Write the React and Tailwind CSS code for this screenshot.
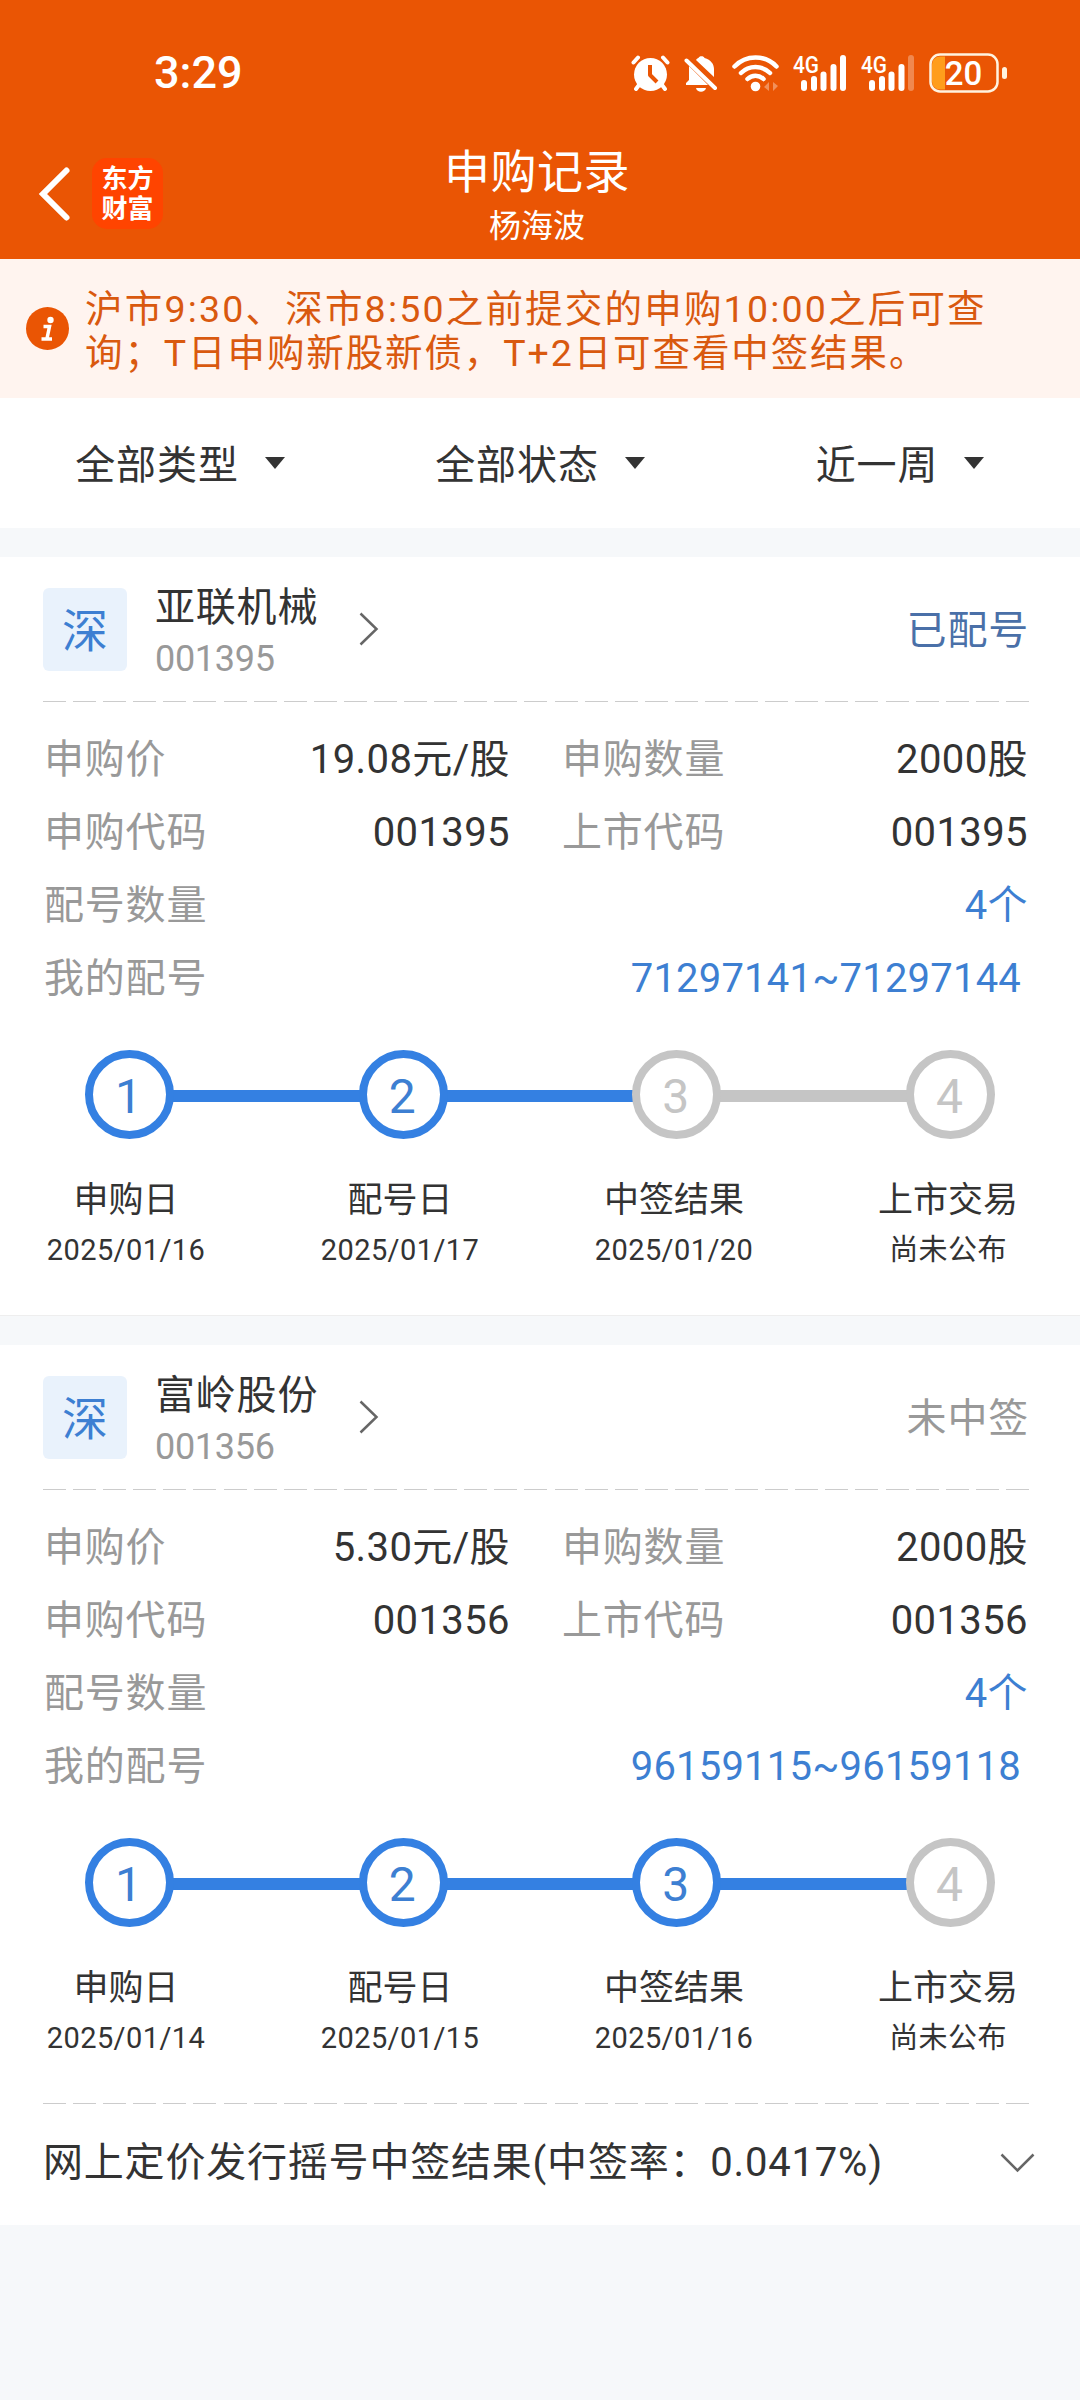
import { useState } from 'react'

const filters = ['全部类型', '全部状态', '近一周']

const records = [
  {
    name: '亚联机械',
    code: '001395',
    status: '已配号',
    statusClass: 'text-[#4a70a8]',
    price: '19.08元/股',
    amount: '2000股',
    count: '4个',
    numbers: '71297141~71297144',
    current: 2,
    steps: [
      { label: '申购日', date: '2025/01/16' },
      { label: '配号日', date: '2025/01/17' },
      { label: '中签结果', date: '2025/01/20' },
      { label: '上市交易', date: '尚未公布' }
    ]
  },
  {
    name: '富岭股份',
    code: '001356',
    status: '未中签',
    statusClass: 'text-[#999999]',
    price: '5.30元/股',
    amount: '2000股',
    count: '4个',
    numbers: '96159115~96159118',
    current: 3,
    steps: [
      { label: '申购日', date: '2025/01/14' },
      { label: '配号日', date: '2025/01/15' },
      { label: '中签结果', date: '2025/01/16' },
      { label: '上市交易', date: '尚未公布' }
    ],
    result: '网上定价发行摇号中签结果(中签率：0.0417%)'
  }
]

function AlarmIcon() {
  return (
    <svg width="39" height="36" viewBox="0 0 39 36" fill="none" stroke="#fff" strokeWidth="4" strokeLinecap="round">
      <path d="M2.5 7.5 7 2.5M36.500 7.500 32 2.500M8 30 5 34M31 30 34 34" />
      <circle cx="19.500" cy="19.500" r="16.500" fill="#fff" stroke="none" />
      <path d="M19 10V20L26 27" stroke="#ea5504" strokeLinecap="butt" strokeLinejoin="round" />
    </svg>
  )
}

function BellOffIcon() {
  return (
    <svg width="34" height="37" viewBox="0 0 34 37" fill="none">
      <path d="M5 11 24 30H2V28L5 25Z" fill="#fff" />
      <path d="M12 5C13 3.500 14 3 14.500 3 15 0.500 20 0.500 20.500 3 27 5 30 9 30 14V22Z" fill="#fff" />
      <path d="M2.500 5.500 31 33" stroke="#fff" strokeWidth="4" strokeLinecap="round" />
      <path d="M12 33H22C21 38 13 38 12 33Z" fill="#fff" />
    </svg>
  )
}

function WifiIcon() {
  return (
    <svg width="47" height="37" viewBox="0 0 47 37" fill="none" stroke="#fff" strokeWidth="4.500" strokeLinecap="round">
      <path d="M2.500 11.500C14 -0.500 33 -0.500 44.500 11.500M9 18C17 10 30 10 38 18M15.500 24C20 19.500 27 19.500 31.500 24" />
      <circle cx="23.500" cy="31.500" r="4.800" fill="#fff" stroke="none" />
      <path d="M32 32 37 27V36M41 27V36L46 31Z" stroke="none" fill="#fff" fillOpacity="0.35" />
    </svg>
  )
}

function SignalIcon({ level }) {
  const bars = [
    { x: 8, y: 25 },
    { x: 18, y: 21 },
    { x: 27.5, y: 16.5 },
    { x: 37.5, y: 9 },
    { x: 47, y: 0 }
  ]
  return (
    <svg className="overflow-visible" width="54" height="36" viewBox="0 0 54 36" fill="#fff">
      <text x="0" y="17.500" fontSize="24" fontWeight="500" textLength="26" lengthAdjust="spacingAndGlyphs">
        4G
      </text>
      {bars.map((bar, index) => (
        <rect key={bar.x} x={bar.x} y={bar.y} width="6" height={36 - bar.y} rx="3" fillOpacity={index < level ? 1 : 0.3} />
      ))}
    </svg>
  )
}

function BatteryIcon() {
  return (
    <svg className="overflow-visible" width="78" height="40" viewBox="0 0 78 40" fill="none">
      <path d="M11 3.500H16V36.500H11A8 8 0 0 1 3 28.500V11.500A8 8 0 0 1 11 3.500Z" fill="#ff9d1c" />
      <rect x="1.500" y="1.500" width="67" height="37" rx="9.500" stroke="#fff3e0" strokeWidth="2.500" />
      <rect x="73" y="14" width="5" height="12" rx="2.500" fill="#fff3e0" />
      <text x="34.500" y="31.500" fontSize="33" fontWeight="500" fill="#fff" textAnchor="middle">
        20
      </text>
    </svg>
  )
}

function StatusBar() {
  return (
    <div className="flex h-[146px] items-center justify-between pl-[154px] pr-[73px]">
      <span className="text-[45px] font-medium leading-[60px] text-white">3:29</span>
      <div className="flex items-center gap-3.5">
        <AlarmIcon />
        <BellOffIcon />
        <WifiIcon />
        <SignalIcon level={5} />
        <SignalIcon level={4} />
        <BatteryIcon />
      </div>
    </div>
  )
}

function TitleBar() {
  return (
    <div className="relative flex h-[113px] items-start">
      <button className="ml-[38px] mt-5">
        <svg width="34" height="56" viewBox="0 0 34 56" fill="none" stroke="#fff" strokeWidth="6" strokeLinecap="round">
          <path d="M28.500 4.500 5 28 28.500 51.500" />
        </svg>
      </button>
      <div className="ml-5 mt-3 flex h-[71px] w-[71px] flex-col items-center justify-center rounded-[15px] bg-[#ff4400] text-[26px] font-bold leading-[30px] text-white">
        <span>东方</span>
        <span>财富</span>
      </div>
      <div className="absolute inset-x-0 top-0.5 flex flex-col items-center pr-1.5 text-white">
        <h1 className="text-[46px] leading-[48px] tracking-[0.5px]">申购记录</h1>
        <span className="mt-1.5 text-[32px] leading-[48px]">杨海波</span>
      </div>
    </div>
  )
}

function Divider() {
  return <div className="mx-[43px] h-px w-[986px] bg-[repeating-linear-gradient(90deg,#cccccc_0px_23px,transparent_23px_30.09px)]" />
}

function Field({ label, value }) {
  return (
    <div className="flex items-center justify-between">
      <span className="text-[#999999]">{label}</span>
      <span className="tracking-[0.4px] text-[#333333]">{value}</span>
    </div>
  )
}

function Steps({ steps, current }) {
  return (
    <div>
      <div className="mx-[85px] mt-[35px] flex items-center">
        {steps.map((step, index) => {
          const done = index < current
          return (
            <div key={step.label} className={index > 0 ? 'flex flex-1 items-center' : 'flex items-center'}>
              {index > 0 && (
                <div className={`-mx-1 mt-[3px] h-3 flex-1 ${index <= current ? 'bg-[#3480e2]' : 'bg-[#c5c5c5]'}`} />
              )}
              <div
                className={`relative flex h-[89px] w-[89px] items-center justify-center rounded-full border-[8.5px] bg-white pr-0.5 pt-1 text-[48px] leading-none ${
                  done ? 'border-[#3480e2] text-[#3d7fd2]' : 'border-[#c5c5c5] text-[#c5c5c5]'
                }`}
              >
                {index + 1}
              </div>
            </div>
          )
        })}
      </div>
      <div className="mt-[37px] flex justify-between pl-[46px] pr-[52px] text-[#333333]">
        {steps.map((step) => (
          <div key={step.label} className="flex w-40 flex-col items-center whitespace-nowrap">
            <span className="text-[35px] leading-[50px]">{step.label}</span>
            <span className="text-[29px] leading-[48px] tracking-[0.4px]">{step.date}</span>
          </div>
        ))}
      </div>
    </div>
  )
}

function RecordCard({ record }) {
  const [open, setOpen] = useState(false)

  return (
    <section className="bg-white">
      {/* Stock */}
      <div className="flex h-36 items-center pl-[43px] pr-[51px]">
        <div className="flex h-[83px] w-[84px] items-center justify-center rounded-md bg-[#e9f2fc] pt-1 text-[46px] leading-none text-[#3d7fd2]">
          深
        </div>
        <div className="ml-7 flex flex-col pt-[7px]">
          <span className="text-[40px] leading-[52px] tracking-[0.8px] text-[#333333]">{record.name}</span>
          <span className="text-[36px] leading-[50px] tracking-[-0.3px] text-[#999999]">{record.code}</span>
        </div>
        <svg className="ml-[41px]" width="20" height="34" viewBox="0 0 20 34" fill="none" stroke="#666" strokeWidth="2.500">
          <path d="M1.500 1.500 17.500 17 1.500 32.500" />
        </svg>
        <span className={`ml-auto mt-1 text-[40px] leading-[60px] tracking-[0.8px] ${record.statusClass}`}>{record.status}</span>
      </div>
      <Divider />

      {/* Details */}
      <div className="pl-11 pr-[52px] pt-[21px] text-[40px] leading-[73px] tracking-[0.8px]">
        <div className="grid grid-cols-[466px_466px] gap-x-[52px]">
          <Field label="申购价" value={record.price} />
          <Field label="申购数量" value={record.amount} />
          <Field label="申购代码" value={record.code} />
          <Field label="上市代码" value={record.code} />
        </div>
        <div className="flex justify-between">
          <span className="text-[#999999]">配号数量</span>
          <span className="tracking-[0.4px] text-[#3d7fd2]">{record.count}</span>
        </div>
        <div className="flex justify-between">
          <span className="text-[#999999]">我的配号</span>
          <span className="mr-[7px] tracking-[0.2px] text-[#3d7fd2]">{record.numbers}</span>
        </div>
      </div>

      <Steps steps={record.steps} current={record.current} />

      {record.result ? (
        <div className="pt-[41px]">
          <Divider />
          <button
            className="flex h-[121px] w-full items-center justify-between pb-1 pl-[43px] pr-[45px] text-[#333333]"
            onClick={() => setOpen(!open)}
          >
            <span className="text-[40px] leading-[60px] tracking-[0.8px]">{record.result}</span>
            <svg
              className={open ? 'rotate-180' : ''}
              width="35"
              height="20"
              viewBox="0 0 35 20"
              fill="none"
              stroke="#666"
              strokeWidth="2.500"
            >
              <path d="M1.500 1.500 17.500 17.500 33.500 1.500" />
            </svg>
          </button>
        </div>
      ) : (
        <div className="h-[42px] border-b border-[#eeeeee]" />
      )}
    </section>
  )
}

export default function App() {
  return (
    <div className="min-h-[2400px] w-[1080px] bg-[#f6f8fa] font-[Roboto,'Noto_Sans_CJK_SC',sans-serif]" lang="zh-CN">
      <header className="bg-[#ea5504]">
        <StatusBar />
        <TitleBar />
      </header>

      {/* Notice */}
      <div className="flex h-[139px] items-center bg-[#fff4ef] pl-[26px]">
        <svg width="43" height="43" viewBox="0 0 43 43" fill="none">
          <circle cx="21.500" cy="21.500" r="21.500" fill="#ea5504" />
          <circle cx="24.500" cy="13" r="3.200" fill="#fff" />
          <path d="M17.500 19.500H23.500L21 31.500M15.500 32H26" stroke="#fff" strokeWidth="3.500" />
        </svg>
        <p className="ml-4 pt-1 text-[37.5px] leading-[44px] tracking-[1.9px] text-[#d9590f]">
          <span className="tracking-[2.2px]">沪市9:30、深市8:50之前提交的申购10:00之后可查</span>
          <br />
          询；T日申购新股新债，T+2日可查看中签结果。
        </p>
      </div>

      {/* Filters */}
      <nav className="flex h-[130px] bg-white">
        {filters.map((name) => (
          <button key={name} className="flex flex-1 items-center justify-center text-[#333333]">
            <span className="mt-1.5 text-[40px] leading-[60px] tracking-[0.9px]">{name}</span>
            <svg className="ml-[26px]" width="20" height="12" viewBox="0 0 20 12" fill="currentColor">
              <path d="M0 0H20L10 12Z" />
            </svg>
          </button>
        ))}
      </nav>

      <main className="flex flex-col gap-[29px] pt-[29px]">
        {records.map((record) => (
          <RecordCard key={record.code} record={record} />
        ))}
      </main>
    </div>
  )
}
